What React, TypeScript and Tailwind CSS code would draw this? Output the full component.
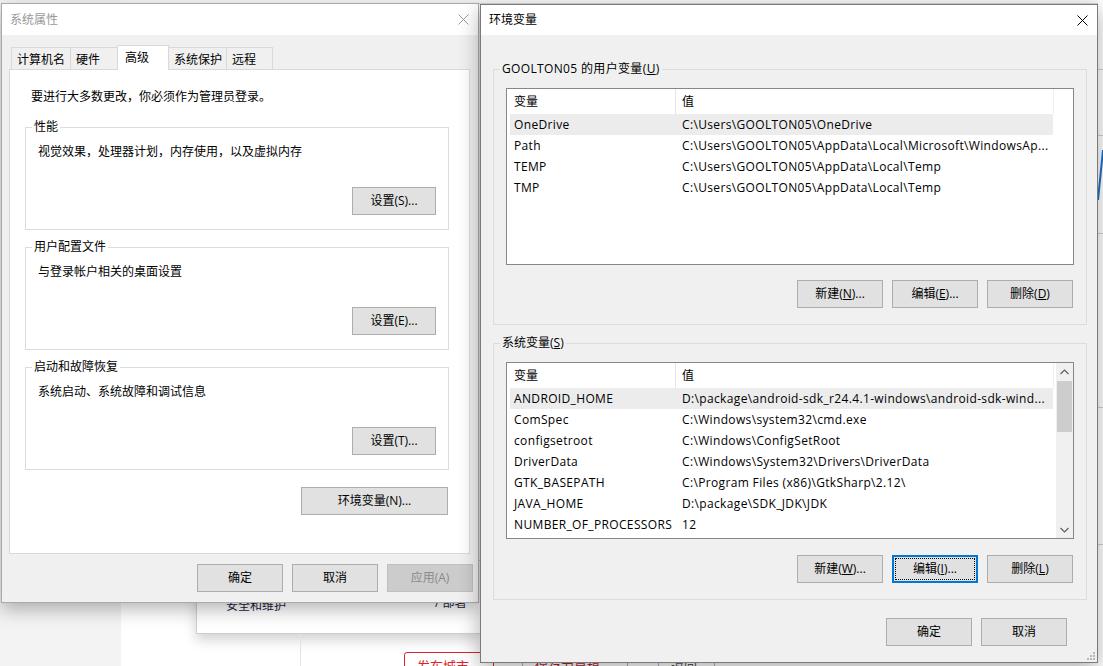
import React from 'react';
import clsx from 'clsx';

const font = "font-['Open_Sans','Noto_Sans_CJK_SC',sans-serif]";

function CloseX({ className }: { className?: string }) {
  return (
    <svg width="11" height="11" viewBox="0 0 11 11" className={className}>
      <path d="M0.5 0.5 L10.5 10.5 M10.5 0.5 L0.5 10.5" stroke="currentColor" strokeWidth="1" fill="none" />
    </svg>
  );
}

function WinButton({
  className,
  children,
  disabled,
  focused,
}: {
  className?: string;
  children: React.ReactNode;
  disabled?: boolean;
  focused?: boolean;
}) {
  return (
    <div
      className={clsx(
        'relative h-[28px] flex items-center justify-center text-[12px] leading-[16px] shrink-0',
        disabled
          ? 'bg-[#cccccc] border border-[#bfbfbf] text-[#8a8a8a]'
          : focused
            ? 'bg-[#e1e1e1] border-2 border-[#0078d7] text-black'
            : 'bg-[#e1e1e1] border border-[#adadad] text-black',
        className
      )}
    >
      {focused && <span className="absolute inset-[1px] border border-dotted border-black" />}
      <span className="relative">{children}</span>
    </div>
  );
}

function GroupBox({ title, text, button }: { title: string; text: string; button: React.ReactNode }) {
  return (
    <fieldset className="w-[424px] border border-[#dcdcdc] px-[12px] pb-[14px]">
      <legend className="-ml-[6px] px-[2px] leading-[16px]">{title}</legend>
      <p className="mt-[9px] leading-[16px]">{text}</p>
      <div className="mt-[27px] flex justify-end">{button}</div>
    </fieldset>
  );
}

function SystemProperties() {
  const tabs = [
    { label: '计算机名', w: 'w-[60px]' },
    { label: '硬件', w: 'w-[48px]' },
    { label: '高级', w: 'w-[52px]', active: true },
    { label: '系统保护', w: 'w-[59px]' },
    { label: '远程', w: 'w-[47px]' },
  ];
  return (
    <div className="absolute left-[1px] top-[3px] w-[478px] h-[600px] flex flex-col bg-[#f0f0f0] border border-[#aaaaaa] shadow-[0_6px_18px_rgba(0,0,0,0.3)] text-[12px] text-black">
      <div className="h-[31px] shrink-0 bg-white flex items-center justify-between">
        <span className="pl-[8px] text-[#999999]">系统属性</span>
        <CloseX className="mr-[9px] text-[#9a9a9a]" />
      </div>
      <div className="ml-[7px] mt-[10px] flex flex-col">
        <div className="h-[24px] flex items-end pl-[2px] relative z-10">
          {tabs.map((t, i) =>
            t.active ? (
              <div
                key={t.label}
                className={clsx(t.w, '-ml-px h-[25px] -mb-px bg-white border border-b-0 border-[#d9d9d9] pl-[7px] flex items-center relative z-10')}
              >
                {t.label}
              </div>
            ) : (
              <div
                key={t.label}
                className={clsx(t.w, i > 0 && '-ml-px', 'h-[22px] bg-[#f0f0f0] border border-b-0 border-[#d9d9d9] pl-[5px] pt-[2px] flex items-center')}
              >
                {t.label}
              </div>
            )
          )}
        </div>
        <div className="w-[461px] h-[485px] bg-white border border-[#d9d9d9] pl-[15px] pt-[19px] flex flex-col">
          <p className="ml-[6px] leading-[16px]">要进行大多数更改，你必须作为管理员登录。</p>
          <div className="mt-[14px] flex flex-col gap-[9px]">
            <GroupBox
              title="性能"
              text="视觉效果，处理器计划，内存使用，以及虚拟内存"
              button={<WinButton className="w-[84px]">设置(S)...</WinButton>}
            />
            <GroupBox
              title="用户配置文件"
              text="与登录帐户相关的桌面设置"
              button={<WinButton className="w-[84px]">设置(E)...</WinButton>}
            />
            <GroupBox
              title="启动和故障恢复"
              text="系统启动、系统故障和调试信息"
              button={<WinButton className="w-[84px]">设置(T)...</WinButton>}
            />
          </div>
          <WinButton className="w-[147px] ml-[276px] mt-[17px]">环境变量(N)...</WinButton>
        </div>
      </div>
      <div className="mt-[10px] flex justify-end gap-[9px] pr-[5px]">
        <WinButton className="w-[86px]">确定</WinButton>
        <WinButton className="w-[86px]">取消</WinButton>
        <WinButton className="w-[86px]" disabled>
          应用(A)
        </WinButton>
      </div>
    </div>
  );
}

type Row = [string, string];

function ArrowUp() {
  return (
    <svg width="9" height="6" viewBox="0 0 9 6">
      <path d="M0.5 5 L4.5 1 L8.5 5" stroke="#606060" strokeWidth="1.2" fill="none" />
    </svg>
  );
}

function ArrowDown() {
  return (
    <svg width="9" height="6" viewBox="0 0 9 6">
      <path d="M0.5 1 L4.5 5 L8.5 1" stroke="#606060" strokeWidth="1.2" fill="none" />
    </svg>
  );
}

function VarList({ rows, scroll }: { rows: Row[]; scroll?: boolean }) {
  return (
    <div className="w-[568px] h-[177px] border border-[#828790] bg-white flex overflow-hidden">
      <div className="flex-1 flex flex-col">
        <div className="h-[25px] shrink-0 flex w-[547px]">
          <div className="w-[169px] pl-[7px] flex items-center border-r border-[#e5e5e5]">变量</div>
          <div className="flex-1 pl-[6px] flex items-center border-r border-[#f0f0f0]">值</div>
        </div>
        <div className="ml-[3px] w-[543px] flex flex-col tracking-[0.35px]">
          {rows.map(([k, v], i) => (
            <div key={k} className={clsx('h-[21px] flex items-center whitespace-nowrap', i === 0 && 'bg-[#ececec]')}>
              <div className="w-[166px] pl-[4px] overflow-hidden">{k}</div>
              <div className="flex-1 pl-[6px] overflow-hidden">{v}</div>
            </div>
          ))}
        </div>
      </div>
      {scroll && (
        <div className="w-[17px] shrink-0 bg-[#f0f0f0] flex flex-col items-center">
          <div className="h-[17px] flex items-center justify-center">
            <ArrowUp />
          </div>
          <div className="w-[15px] h-[51px] mt-[1px] bg-[#cdcdcd]" />
          <div className="flex-1" />
          <div className="h-[17px] flex items-center justify-center">
            <ArrowDown />
          </div>
        </div>
      )}
    </div>
  );
}

function EnvVariables() {
  const userRows: Row[] = [
    ['OneDrive', 'C:\\Users\\GOOLTON05\\OneDrive'],
    ['Path', 'C:\\Users\\GOOLTON05\\AppData\\Local\\Microsoft\\WindowsAp...'],
    ['TEMP', 'C:\\Users\\GOOLTON05\\AppData\\Local\\Temp'],
    ['TMP', 'C:\\Users\\GOOLTON05\\AppData\\Local\\Temp'],
  ];
  const sysRows: Row[] = [
    ['ANDROID_HOME', 'D:\\package\\android-sdk_r24.4.1-windows\\android-sdk-wind...'],
    ['ComSpec', 'C:\\Windows\\system32\\cmd.exe'],
    ['configsetroot', 'C:\\Windows\\ConfigSetRoot'],
    ['DriverData', 'C:\\Windows\\System32\\Drivers\\DriverData'],
    ['GTK_BASEPATH', 'C:\\Program Files (x86)\\GtkSharp\\2.12\\'],
    ['JAVA_HOME', 'D:\\package\\SDK_JDK\\JDK'],
    ['NUMBER_OF_PROCESSORS', '12'],
  ];
  return (
    <div className="absolute left-[480px] top-[4px] w-[618px] h-[659px] flex flex-col bg-[#f0f0f0] border border-[#7a7a7a] shadow-[0_6px_20px_rgba(0,0,0,0.32)] text-[12px] text-black">
      <div className="h-[30px] shrink-0 bg-white flex items-center justify-between">
        <span className="pl-[8px]">环境变量</span>
        <CloseX className="mr-[9px] text-black" />
      </div>
      <div className="ml-[12px] mt-[26px] flex flex-col w-[593px]">
        <fieldset className="border border-[#dcdcdc] px-[12px] pb-[16px]">
          <legend className="-ml-[6px] px-[2px] leading-[16px] tracking-[0.35px]">
            GOOLTON05 的用户变量(<span className="underline">U</span>)
          </legend>
          <div className="mt-[11px]">
            <VarList rows={userRows} />
          </div>
          <div className="mt-[15px] w-[568px] flex justify-end gap-[9px] pr-[1px]">
            <WinButton className="w-[86px]">
              新建(<span className="underline">N</span>)...
            </WinButton>
            <WinButton className="w-[86px]">
              编辑(<span className="underline">E</span>)...
            </WinButton>
            <WinButton className="w-[86px]">
              删除(<span className="underline">D</span>)
            </WinButton>
          </div>
        </fieldset>
        <fieldset className="mt-[10px] border border-[#dcdcdc] px-[12px] pb-[16px]">
          <legend className="-ml-[6px] px-[2px] leading-[16px]">
            系统变量(<span className="underline">S</span>)
          </legend>
          <div className="mt-[11px]">
            <VarList rows={sysRows} scroll />
          </div>
          <div className="mt-[16px] w-[568px] flex justify-end gap-[9px] pr-[1px]">
            <WinButton className="w-[86px]">
              新建(<span className="underline">W</span>)...
            </WinButton>
            <WinButton className="w-[86px]" focused>
              编辑(<span className="underline">I</span>)...
            </WinButton>
            <WinButton className="w-[86px]">
              删除(<span className="underline">L</span>)
            </WinButton>
          </div>
        </fieldset>
      </div>
      <div className="mt-[18px] flex justify-end gap-[9px] pr-[30px]">
        <WinButton className="w-[86px]">确定</WinButton>
        <WinButton className="w-[86px]">取消</WinButton>
      </div>
      <svg width="8" height="8" viewBox="0 0 8 8" className="absolute right-[2px] bottom-[2px]">
        <rect x="6" y="0" width="2" height="2" fill="#b8b8b8" />
        <rect x="3" y="3" width="2" height="2" fill="#b8b8b8" />
        <rect x="6" y="3" width="2" height="2" fill="#b8b8b8" />
        <rect x="0" y="6" width="2" height="2" fill="#b8b8b8" />
        <rect x="3" y="6" width="2" height="2" fill="#b8b8b8" />
        <rect x="6" y="6" width="2" height="2" fill="#b8b8b8" />
      </svg>
    </div>
  );
}

function Desktop() {
  return (
    <div className="absolute inset-0 flex">
      <div className="w-[121px] h-full bg-[#f3f3f3]" />
      <div className="flex-1 h-full bg-white flex flex-col">
        <div className="h-[4px] bg-[#f7f7f7] border-b border-[#d6d6d6]" />
      </div>
    </div>
  );
}

function BackgroundBits() {
  return (
    <>
      {/* dropdown behind the dialogs */}
      <div className="absolute left-[196px] top-[560px] w-[286px] h-[74px] bg-white border border-[#cfcfcf] shadow-[0_6px_12px_rgba(0,0,0,0.18)]">
        <div className="absolute left-[29px] top-[37px] text-[12px] leading-[16px] text-[#1a1a40]">安全和维护</div>
        <div className="absolute left-[238px] top-[34px] text-[12px] leading-[16px] text-[#1a1a40]">/ 部署</div>
      </div>
      <div className="absolute left-[300px] top-[634px] w-px h-[32px] bg-[#e3e3e3]" />
      {/* bottom buttons of the page behind */}
      <div className="absolute left-[404px] top-[652px] flex text-[13px] leading-[18px]">
        <div className="w-[90px] h-[20px] border border-[#d9232d] rounded-t-[3px] pl-[12px] pt-[4px] text-[#d9232d]">发布城市</div>
        <div className="w-[28px] h-[20px] border-t border-[#d9232d]" />
        <div className="w-[106px] h-[20px] border border-b-0 border-[#b0b0b0] pl-[12px] pt-[4px] text-[#b3232d]">保存为草稿</div>
        <div className="w-[30px]" />
        <div className="w-[57px] h-[20px] border border-b-0 border-[#b0b0b0] pl-[12px] pt-[4px] text-[#555]">返回</div>
      </div>
      {/* chart sliver on the far right */}
      <div className="absolute left-[1098px] top-0 w-[5px] h-full bg-white">
        <div className="mt-[69px] h-px bg-[#d0d0d0]" />
        <div className="mt-[65px] h-px bg-[#d0d0d0]" />
        <div className="mt-[97px] h-px bg-[#d0d0d0]" />
        <div className="mt-[173px] h-px bg-[#d0d0d0]" />
        <div className="mt-[136px] h-px bg-[#d0d0d0]" />
      </div>
      <svg width="5" height="60" viewBox="0 0 5 60" className="absolute left-[1098px] top-[145px]">
        <path d="M0 55 L5 5" stroke="#1f6fc5" strokeWidth="2" fill="none" />
      </svg>
    </>
  );
}

export default function App() {
  return (
    <div className={clsx('relative w-[1103px] h-[666px] overflow-hidden bg-white', font)}>
      <Desktop />
      <BackgroundBits />
      <SystemProperties />
      <EnvVariables />
    </div>
  );
}
